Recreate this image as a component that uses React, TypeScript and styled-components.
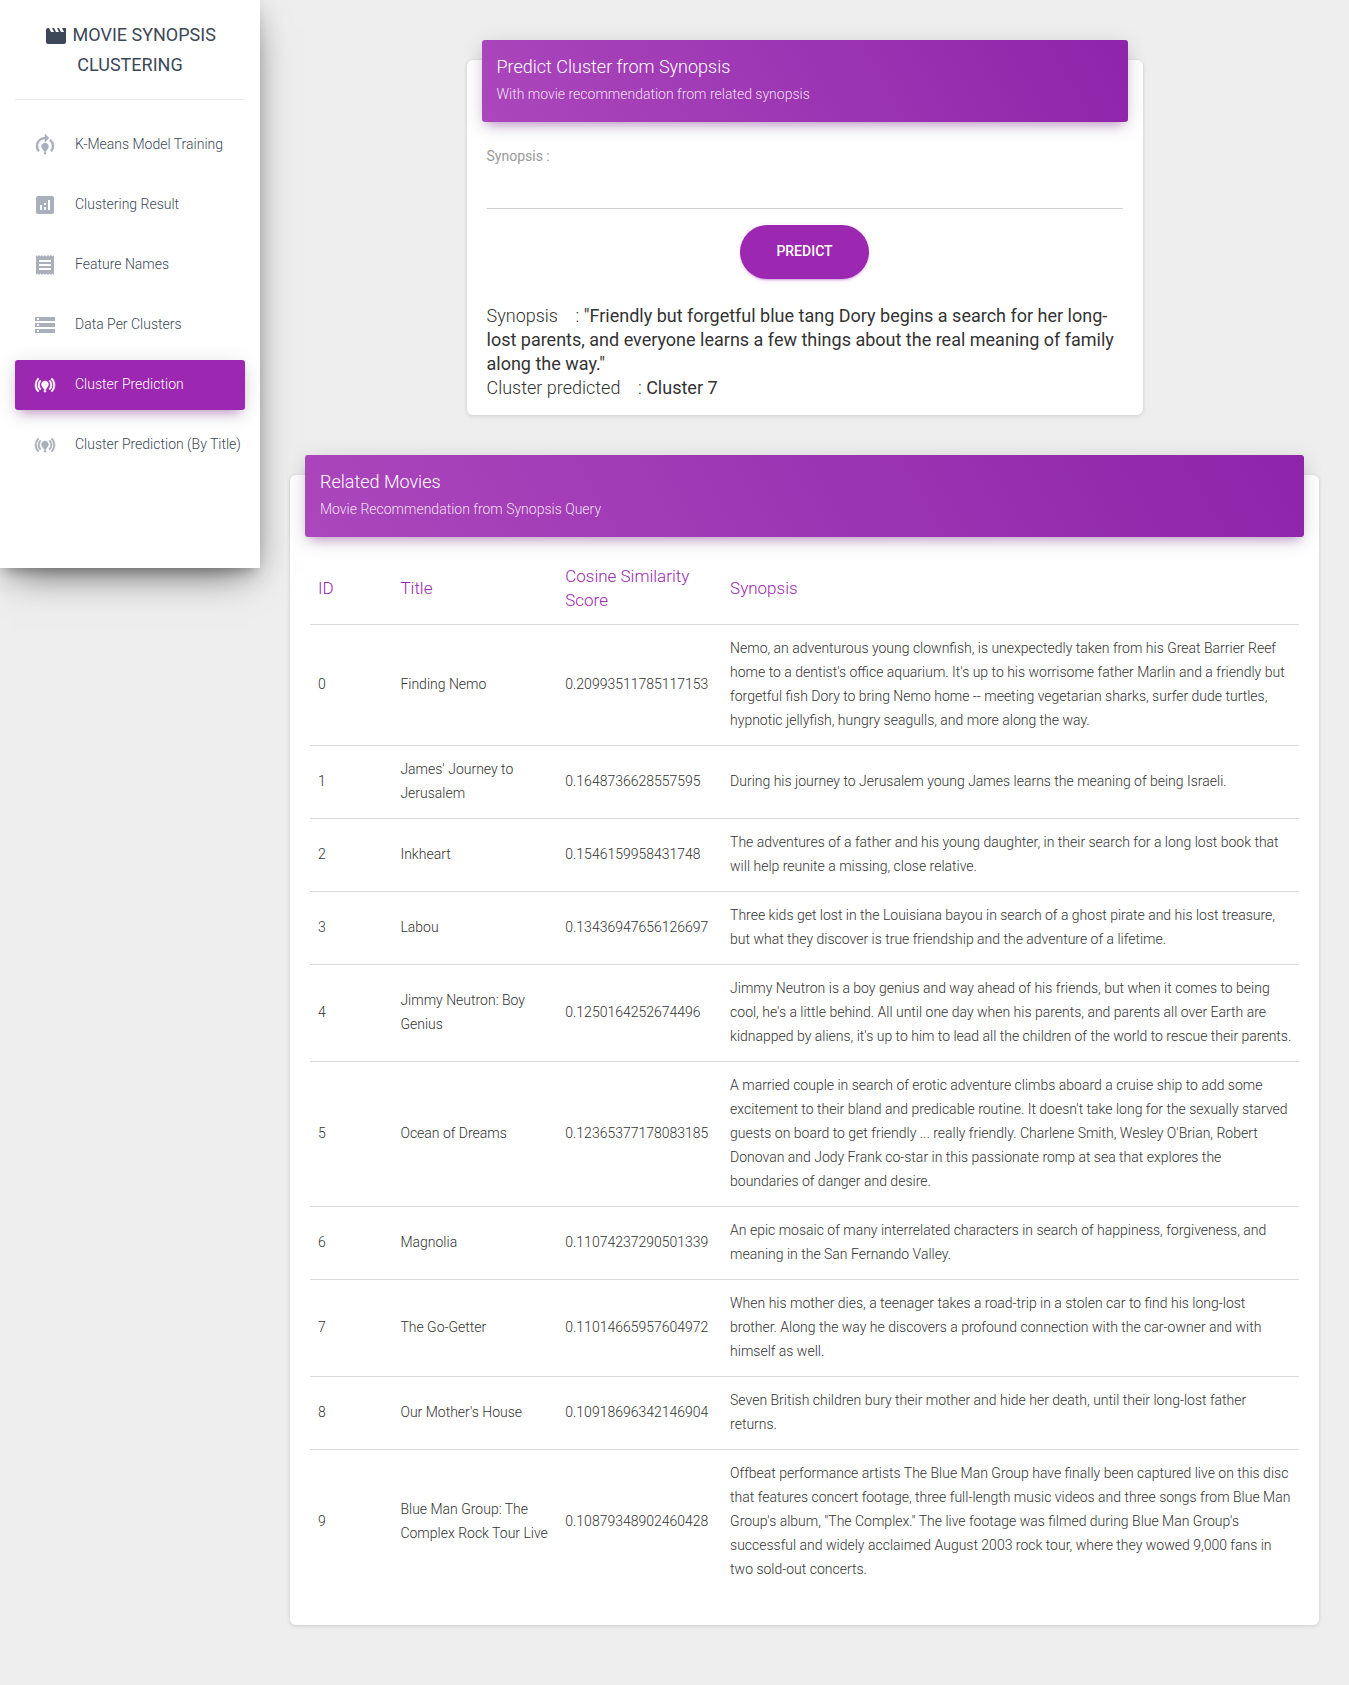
import React from 'react';
import styled, { createGlobalStyle, css } from 'styled-components';
import {
  MdAnalytics,
  MdModelTraining,
  MdMovie,
  MdOnlinePrediction,
  MdReceipt,
  MdStorage,
} from 'react-icons/md';

const GlobalStyle = createGlobalStyle`
  *, *::before, *::after { box-sizing: border-box; }
  body {
    margin: 0;
    background: #eee;
    color: #333;
    font-family: Roboto, "Liberation Sans", sans-serif;
    font-size: 14px;
    font-weight: 300;
    line-height: 24px;
  }
`;

const Layout = styled.div`
  display: flex;
  align-items: flex-start;
`;

const Sidebar = styled.aside`
  position: relative;
  z-index: 1;
  flex: 0 0 260px;
  min-width: 0;
  padding-bottom: 98px;
  background: #fff;
  box-shadow:
    0 16px 38px -12px rgba(0, 0, 0, 0.56),
    0 4px 25px 0 rgba(0, 0, 0, 0.12),
    0 8px 10px -5px rgba(0, 0, 0, 0.2);
`;

const Brand = styled.a`
  display: block;
  margin: 0 15px;
  padding: 20px 0 19px;
  border-bottom: 1px solid rgba(180, 180, 180, 0.3);
  color: #3c4858;
  font-size: 18px;
  font-weight: 400;
  line-height: 30px;
  text-align: center;
  text-decoration: none;
  text-transform: uppercase;

  svg {
    width: 24px;
    height: 24px;
    vertical-align: middle;
  }
`;

const NavList = styled.ul`
  display: flex;
  flex-direction: column;
  gap: 10px;
  margin: 20px 0 0;
  padding: 0 15px;
  list-style: none;
`;

const NavLink = styled.a<{ $active: boolean }>`
  display: flex;
  align-items: flex-start;
  gap: 15px;
  padding: 10px 15px;
  border-radius: 3px;
  color: #3c4858;
  line-height: 28px;
  text-decoration: none;
  white-space: nowrap;

  ${({ $active }) =>
    $active &&
    css`
      background: #9c27b0;
      color: #fff;
      box-shadow:
        0 4px 20px 0 rgba(0, 0, 0, 0.14),
        0 7px 10px -5px rgba(156, 39, 176, 0.4);
    `}
`;

const NavIcon = styled.span<{ $active: boolean; $bold: boolean }>`
  display: flex;
  flex: 0 0 30px;
  align-items: center;
  justify-content: center;
  height: 30px;
  color: ${({ $active }) => ($active ? '#fff' : '#a9afbb')};
  font-size: 24px;

  path:not([fill='none']) {
    stroke-width: ${({ $bold }) => ($bold ? 0.5 : 0)};
  }
`;

const Main = styled.main`
  display: grid;
  flex: 1;
  grid-template-columns: repeat(12, minmax(0, 1fr));
  gap: 60px 30px;
  min-width: 0;
  padding: 60px 30px;
`;

const Card = styled.section<{ $columns: string }>`
  grid-column: ${({ $columns }) => $columns};
  border-radius: 6px;
  background: #fff;
  box-shadow: 0 1px 4px 0 rgba(0, 0, 0, 0.14);
`;

const CardHeader = styled.header`
  margin: -20px 15px 0;
  padding: 14px 15px 17px;
  border-radius: 3px;
  background: linear-gradient(60deg, #ab47bc, #8e24aa);
  color: #fff;
  box-shadow:
    0 4px 20px 0 rgba(0, 0, 0, 0.14),
    0 7px 10px -5px rgba(156, 39, 176, 0.4);
`;

const CardTitle = styled.h4`
  margin: 0 0 5px;
  font-size: 18px;
  font-weight: 300;
  line-height: 25px;
`;

const CardCategory = styled.p`
  margin: 0;
  color: rgba(255, 255, 255, 0.85);
  line-height: 21px;
`;

const CardBody = styled.div`
  padding: 15px 20px;
`;

const Form = styled.form`
  display: flex;
  flex-direction: column;
  padding-top: 9px;
`;

const Label = styled.label`
  color: #999;
  font-weight: 400;
  line-height: 20px;
`;

const TextInput = styled.input`
  height: 43px;
  padding: 7px 0;
  border: 0;
  border-bottom: 1px solid #d2d2d2;
  outline: 0;
  background: transparent;
  color: #495057;
  font: inherit;
  font-weight: 400;
`;

const PredictButton = styled.button`
  align-self: center;
  margin: 16px 0 25px;
  padding: 17px 36px 19px;
  border: 0;
  border-radius: 30px;
  background: #9c27b0;
  color: #fff;
  font: 500 14px/18px Roboto, "Liberation Sans", sans-serif;
  text-transform: uppercase;
  cursor: pointer;
  box-shadow:
    0 2px 2px 0 rgba(156, 39, 176, 0.14),
    0 3px 1px -2px rgba(156, 39, 176, 0.2),
    0 1px 5px 0 rgba(156, 39, 176, 0.12);
`;

const Result = styled.p`
  margin: 0;
  font-size: 18px;

  strong {
    font-weight: 400;
  }
`;

const Table = styled.table`
  width: 100%;
  margin-bottom: 16px;
  border-collapse: collapse;
  table-layout: fixed;
`;

const HeadCell = styled.th<{ $share: number }>`
  width: ${({ $share }) => ($share / 12) * 100}%;
  padding: 12px 8px;
  color: #9c27b0;
  font-size: 17px;
  font-weight: 300;
  text-align: left;
  vertical-align: middle;
`;

const Cell = styled.td`
  padding: 11px 6px 13px 8px;
  border-top: 1px solid #dadada;
  vertical-align: middle;
`;

const navItems = [
  { label: 'K-Means Model Training', Icon: MdModelTraining, bold: true },
  { label: 'Clustering Result', Icon: MdAnalytics },
  { label: 'Feature Names', Icon: MdReceipt },
  { label: 'Data Per Clusters', Icon: MdStorage },
  { label: 'Cluster Prediction', Icon: MdOnlinePrediction, bold: true, active: true },
  { label: 'Cluster Prediction (By Title)', Icon: MdOnlinePrediction, bold: true },
];

const columns = [
  { label: 'ID', share: 1 },
  { label: 'Title', share: 2 },
  { label: 'Cosine Similarity Score', share: 2 },
  { label: 'Synopsis', share: 7 },
];

const movies = [
  {
    title: 'Finding Nemo',
    score: '0.20993511785117153',
    synopsis:
      "Nemo, an adventurous young clownfish, is unexpectedly taken from his Great Barrier Reef home to a dentist's office aquarium. It's up to his worrisome father Marlin and a friendly but forgetful fish Dory to bring Nemo home -- meeting vegetarian sharks, surfer dude turtles, hypnotic jellyfish, hungry seagulls, and more along the way.",
  },
  {
    title: "James' Journey to Jerusalem",
    score: '0.1648736628557595',
    synopsis: 'During his journey to Jerusalem young James learns the meaning of being Israeli.',
  },
  {
    title: 'Inkheart',
    score: '0.1546159958431748',
    synopsis:
      'The adventures of a father and his young daughter, in their search for a long lost book that will help reunite a missing, close relative.',
  },
  {
    title: 'Labou',
    score: '0.13436947656126697',
    synopsis:
      'Three kids get lost in the Louisiana bayou in search of a ghost pirate and his lost treasure, but what they discover is true friendship and the adventure of a lifetime.',
  },
  {
    title: 'Jimmy Neutron: Boy Genius',
    score: '0.1250164252674496',
    synopsis:
      "Jimmy Neutron is a boy genius and way ahead of his friends, but when it comes to being cool, he's a little behind. All until one day when his parents, and parents all over Earth are kidnapped by aliens, it's up to him to lead all the children of the world to rescue their parents.",
  },
  {
    title: 'Ocean of Dreams',
    score: '0.12365377178083185',
    synopsis:
      "A married couple in search of erotic adventure climbs aboard a cruise ship to add some excitement to their bland and predicable routine. It doesn't take long for the sexually starved guests on board to get friendly ... really friendly. Charlene Smith, Wesley O'Brian, Robert Donovan and Jody Frank co-star in this passionate romp at sea that explores the boundaries of danger and desire.",
  },
  {
    title: 'Magnolia',
    score: '0.11074237290501339',
    synopsis:
      'An epic mosaic of many interrelated characters in search of happiness, forgiveness, and meaning in the San Fernando Valley.',
  },
  {
    title: 'The Go-Getter',
    score: '0.11014665957604972',
    synopsis:
      'When his mother dies, a teenager takes a road-trip in a stolen car to find his long-lost brother. Along the way he discovers a profound connection with the car-owner and with himself as well.',
  },
  {
    title: "Our Mother's House",
    score: '0.10918696342146904',
    synopsis:
      'Seven British children bury their mother and hide her death, until their long-lost father returns.',
  },
  {
    title: 'Blue Man Group: The Complex Rock Tour Live',
    score: '0.10879348902460428',
    synopsis:
      'Offbeat performance artists The Blue Man Group have finally been captured live on this disc that features concert footage, three full-length music videos and three songs from Blue Man Group\'s album, "The Complex." The live footage was filmed during Blue Man Group\'s successful and widely acclaimed August 2003 rock tour, where they wowed 9,000 fans in two sold-out concerts.',
  },
];

export default function App() {
  return (
    <>
      <GlobalStyle />
      <Layout>
        <Sidebar>
          <Brand href="#">
            <MdMovie aria-hidden /> Movie Synopsis Clustering
          </Brand>
          <nav>
            <NavList>
              {navItems.map(({ label, Icon, bold = false, active = false }) => (
                <li key={label}>
                  <NavLink href="#" $active={active} aria-current={active ? 'page' : undefined}>
                    <NavIcon $active={active} $bold={bold}>
                      <Icon aria-hidden />
                    </NavIcon>
                    {label}
                  </NavLink>
                </li>
              ))}
            </NavList>
          </nav>
        </Sidebar>
        <Main>
          <Card $columns="3 / span 8">
            <CardHeader>
              <CardTitle>Predict Cluster from Synopsis</CardTitle>
              <CardCategory>With movie recommendation from related synopsis</CardCategory>
            </CardHeader>
            <CardBody>
              <Form onSubmit={(event) => event.preventDefault()}>
                <Label htmlFor="synopsis">Synopsis :</Label>
                <TextInput id="synopsis" name="synopsis" type="text" />
                <PredictButton type="submit">Predict</PredictButton>
              </Form>
              <Result>
                Synopsis{'\u00a0\u00a0\u00a0'} :{' '}
                <strong>
                  "Friendly but forgetful blue tang Dory begins a search for her long-lost parents,
                  and everyone learns a few things about the real meaning of family along the way."
                </strong>
              </Result>
              <Result>
                Cluster predicted{'\u00a0\u00a0\u00a0'} : <strong>Cluster 7</strong>
              </Result>
            </CardBody>
          </Card>
          <Card $columns="1 / -1">
            <CardHeader>
              <CardTitle>Related Movies</CardTitle>
              <CardCategory>Movie Recommendation from Synopsis Query</CardCategory>
            </CardHeader>
            <CardBody>
              <Table>
                <thead>
                  <tr>
                    {columns.map(({ label, share }) => (
                      <HeadCell key={label} scope="col" $share={share}>
                        {label}
                      </HeadCell>
                    ))}
                  </tr>
                </thead>
                <tbody>
                  {movies.map(({ title, score, synopsis }, id) => (
                    <tr key={title}>
                      <Cell>{id}</Cell>
                      <Cell>{title}</Cell>
                      <Cell>{score}</Cell>
                      <Cell>{synopsis}</Cell>
                    </tr>
                  ))}
                </tbody>
              </Table>
            </CardBody>
          </Card>
        </Main>
      </Layout>
    </>
  );
}
